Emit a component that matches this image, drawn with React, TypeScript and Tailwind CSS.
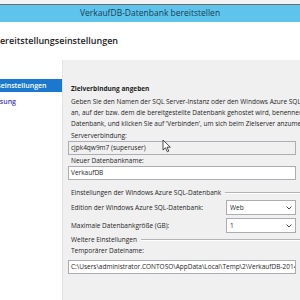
import React from 'react';

const font = { fontFamily: '"Open Sans", "Noto Sans", sans-serif' };

const TextBox: React.FC<{ value: string; readOnly?: boolean }> = ({ value, readOnly }) => (
  <div
    className={`h-[14px] w-[228px] border border-[#abadb3] px-[2px] text-[6.5px] leading-[12px] whitespace-nowrap overflow-hidden ${
      readOnly ? 'bg-[#f0f0f0]' : 'bg-white'
    }`}
  >
    {value}
  </div>
);

const Select: React.FC<{ value: string }> = ({ value }) => (
  <div className="flex h-[15px] w-[70px] shrink-0 items-center justify-between border border-[#abadb3] bg-white px-[3px] text-[6.5px]">
    <span>{value}</span>
    <svg width="6" height="4" viewBox="0 0 6 4">
      <path d="M0.5 0.5 L3 3 L5.5 0.5" fill="none" stroke="#444" strokeWidth="1" />
    </svg>
  </div>
);

// section header with a separator line running to the right edge
const Section: React.FC<{ title: string }> = ({ title }) => (
  <div className="flex h-[11px] items-center">
    <span className="ml-[3px] whitespace-nowrap">{title}</span>
    <div className="ml-[4px] h-[2px] grow border-t border-[#b4b4b4] bg-white" />
  </div>
);

export default function App() {
  return (
    <div className="relative h-[300px] w-[300px] overflow-hidden bg-white text-[#1e1e1e]" style={font}>
      <div className="h-[4px] bg-[#f3f3f3]" />
      <div className="h-[1px] bg-[#6b6b6b]" />
      <div className="flex h-[17px] items-center justify-center bg-[#5fc4ec] text-[8.5px] text-[#173d55]">
        VerkaufDB-Datenbank bereitstellen
      </div>

      <div className="flex h-[38px] items-center">
        <h1 className="ml-[-6px] whitespace-nowrap text-[9px] font-semibold">Bereitstellungseinstellungen</h1>
      </div>

      <div className="flex h-[240px]">
        <div className="w-[62px] shrink-0 overflow-hidden bg-white pt-[19px]">
          <div className="h-[13px] whitespace-nowrap bg-[#1a79cf] text-[7px] font-semibold leading-[13px] text-white">
            <span className="ml-[-50px]">Bereitstellungseinstellungen</span>
          </div>
          <div className="mt-[3px] h-[13px] whitespace-nowrap text-[7px] font-semibold leading-[13px] text-[#3d3db0]">
            <span className="ml-[-48px]">Zusammenfassung</span>
          </div>
        </div>

        <div className="min-w-0 flex-1 overflow-hidden border-l border-[#e3e3e3] bg-[#f0f0f0] pl-[5px] pt-[23px] text-[6.5px] leading-[11px]">
          <div className="ml-[3px] font-bold">Zielverbindung angeben</div>
          <div className="ml-[3px] mt-[2px] whitespace-nowrap">
            <div>Geben Sie den Namen der SQL Server-Instanz oder den Windows Azure SQL-Datenbank-Server</div>
            <div>an, auf der bzw. dem die bereitgestellte Datenbank gehostet wird, benennen Sie die neue</div>
            <div>Datenbank, und klicken Sie auf 'Verbinden', um sich beim Zielserver anzumelden.</div>
          </div>

          <div className="ml-[3px] mt-[1px]">Serververbindung:</div>
          <TextBox value="cjpk4qw9m7 (superuser)" readOnly />
          <div className="ml-[3px]">Neuer Datenbankname:</div>
          <TextBox value="VerkaufDB" />

          <div className="mt-[7px]">
            <Section title="Einstellungen der Windows Azure SQL-Datenbank" />
          </div>
          <div className="mt-[2px] flex items-center justify-between pr-[4px]">
            <span className="ml-[3px] whitespace-nowrap">Edition der Windows Azure SQL-Datenbank:</span>
            <Select value="Web" />
          </div>
          <div className="mt-[3px] flex items-center justify-between pr-[4px]">
            <span className="ml-[3px] whitespace-nowrap">Maximale Datenbankgröße (GB):</span>
            <Select value="1" />
          </div>

          <div className="mt-[1px]">
            <Section title="Weitere Einstellungen" />
          </div>
          <div className="ml-[3px]">Temporärer Dateiname:</div>
          <div className="mt-[4px]">
            <TextBox value="C:\Users\administrator.CONTOSO\AppData\Local\Temp\2\VerkaufDB-20140101.bacpac" />
          </div>
        </div>
      </div>

      <svg className="absolute left-[162px] top-[139px]" width="10" height="14" viewBox="0 0 10 14">
        <path d="M1 1 L1 11 L3.5 8.8 L5.3 12.8 L6.8 12.1 L5 8.2 L8.3 8.2 Z" fill="white" stroke="#222" strokeWidth="0.8" />
      </svg>
    </div>
  );
}
